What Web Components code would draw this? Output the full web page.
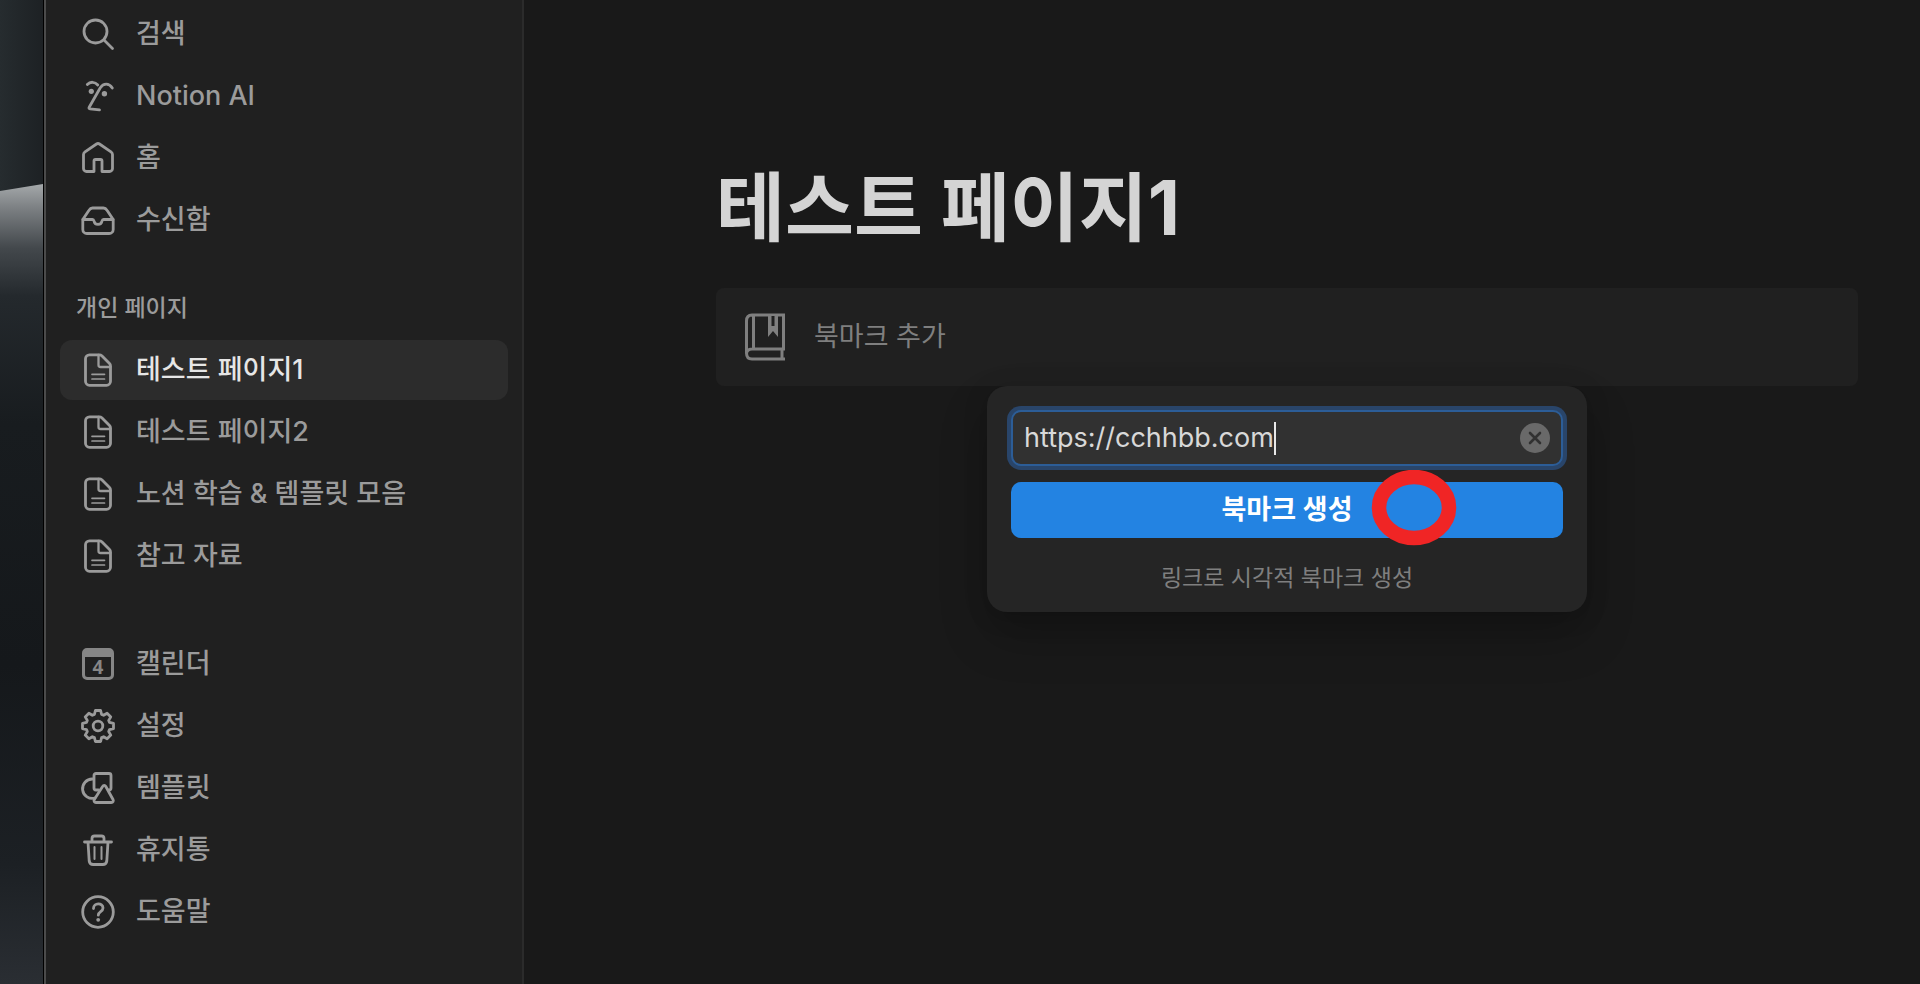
<!DOCTYPE html>
<html lang="ko">
<head>
<meta charset="UTF-8">
<title>테스트 페이지1</title>
<style>
    body {
        margin: 0;
        background: #191919;
        color: #9b9b9b;
        font-family: Inter, "Noto Sans CJK KR", sans-serif;
        font-size: 27px;
        line-height: 36px;
    }
</style>
</head>
<body>
<notion-window>
    <side-bar slot="sidebar">
        <side-item icon="search">검색</side-item>
        <side-item icon="ai">Notion AI</side-item>
        <side-item icon="home">홈</side-item>
        <side-item icon="inbox">수신함</side-item>
        <side-heading>개인 페이지</side-heading>
        <side-item icon="page" active>테스트 페이지1</side-item>
        <side-item icon="page">테스트 페이지2</side-item>
        <side-item icon="page">노션 학습 &amp; 템플릿 모음</side-item>
        <side-item icon="page">참고 자료</side-item>
        <side-gap></side-gap>
        <side-item icon="calendar">캘린더</side-item>
        <side-item icon="settings">설정</side-item>
        <side-item icon="template">템플릿</side-item>
        <side-item icon="trash">휴지통</side-item>
        <side-item icon="help">도움말</side-item>
    </side-bar>
    <page-title>테스트 페이지1</page-title>
    <bookmark-block>
        북마크 추가
        <bookmark-popup slot="popup" url="https://cchhbb.com">
            북마크 생성
            <span slot="hint">링크로 시각적 북마크 생성</span>
        </bookmark-popup>
    </bookmark-block>
</notion-window>

<script>
// all icons share a 36x36 box, stroked with the current text colour
const icons = {
    search: '<circle cx="15.5" cy="15.5" r="11.5"/><path d="M24 24l8.5 8.5"/>',
    ai: '<path d="M7.300 6.500c3-3.200 7.700-2.900 10.500.5"/><path d="M32.300 10c-3.300-5.200-8.800-5.200-12-.2L9.200 29.200c-.5.9-.2 1.500.8 1.600l9.500 1"/><circle cx="11.300" cy="13.300" r="2.600" fill="currentColor" stroke="none"/><circle cx="24.400" cy="15.800" r="2.700" fill="currentColor" stroke="none"/>',
    home: '<path d="M3.500 14.500c0-1.200.5-2 1.500-2.700L16.500 4c1-.700 2-.700 3 0L31 11.800c1 .7 1.500 1.500 1.500 2.700V28.500a3 3 0 0 1-3 3H22V21c0-1-.500-1.500-1.500-1.500h-5c-1 0-1.500.5-1.500 1.500v10.500H6.500a3 3 0 0 1-3-3z"/>',
    inbox: '<path d="M2.800 17.500v10a4 4 0 0 0 4 4h22.400a4 4 0 0 0 4-4v-10l-6.200-9.300C26 6.600 25 6 23.500 6h-11C11 6 10 6.600 9 8.200z"/><path d="M3 17.500h9.500c1 0 1.300.7 1.500 1.500.8 4.500 7.200 4.500 8 0 .2-.8.5-1.500 1.500-1.500H33"/>',
    page: '<path d="M19.500 2.800H9.500a4 4 0 0 0-4 4v22.500a4 4 0 0 0 4 4h17a4 4 0 0 0 4-4V14c0-1-.3-1.700-1-2.400L21.800 3.700c-.7-.6-1.400-.9-2.300-.9z"/><path d="M18.500 3v10a2 2 0 0 0 2 2h9.800" stroke-width="2.300"/><path d="M12 22.300h12.500M12 27h12.500" stroke-width="1.700"/>',
    calendar: '<path fill="#868686" stroke="none" fill-rule="evenodd" d="M7 2h22a5 5 0 0 1 5 5v22a5 5 0 0 1-5 5H7a5 5 0 0 1-5-5V7a5 5 0 0 1 5-5zM5 11v17.500A2.500 2.500 0 0 0 7.500 31h21a2.500 2.500 0 0 0 2.500-2.500V11z"/><text x="18" y="27.500" text-anchor="middle" font-family="Noto Sans" font-size="19" font-weight="700" fill="#868686" stroke="none">4</text>',
    settings: '<circle cx="18" cy="18" r="4.800"/><path d="M14.400 6.500L15.400 2.500H20.600L21.600 6.500L23.600 7.300L27.100 5.200L30.800 8.900L28.700 12.400L29.500 14.400L33.500 15.400V20.600L29.500 21.600L28.700 23.600L30.800 27.100L27.100 30.800L23.600 28.700L21.600 29.500L20.600 33.500H15.400L14.400 29.500L12.400 28.700L8.900 30.800L5.200 27.100L7.300 23.600L6.500 21.600L2.500 20.600V15.400L6.500 14.400L7.300 12.400L5.200 8.900L8.900 5.200L12.400 7.300z"/>',
    template: '<path d="M12.500 9a9.700 9.700 0 1 0 2.500 19"/><path d="M18.500 20h-2.500a2 2 0 0 1-2-2V5.500a2 2 0 0 1 2-2h13a2 2 0 0 1 2 2v12.500a2 2 0 0 1-2 2"/><path d="M22.600 16.500c.8-1.500 2.400-1.500 3.200 0L33 29.500c.8 1.600 0 3-1.700 3H16c-1.700 0-2.500-1.400-1.700-3z"/>',
    trash: '<path d="M4.500 10h27M12 10V6.500A2.500 2.500 0 0 1 14.500 4h7A2.500 2.500 0 0 1 24 6.500V10M8 10l1.200 19a4 4 0 0 0 4 3.500h9.600a4 4 0 0 0 4-3.500L28 10"/><path d="M14.500 15v12M21.500 15v12" stroke-width="2"/>',
    help: '<circle cx="18" cy="18" r="15.300"/><path d="M13.500 14.500c0-6 9.500-6 9.500-.5 0 3.800-4.700 3.500-4.700 7.200"/><circle cx="18.200" cy="25.800" r="1.900" fill="currentColor" stroke="none"/>'
};

class NotionWindow extends HTMLElement {
    connectedCallback() {
        this.attachShadow({ mode: 'open' });
        this.shadowRoot.innerHTML = `
            <style>
                :host {
                    display: flex;
                    min-height: 100vh;
                }
                .desktop {
                    flex: none;
                    width: 43px;
                    border-right: 1px solid #000;
                    background: #17191c;
                }
                .desktop svg {
                    display: block;
                    width: 100%;
                    height: 100%;
                }
                main {
                    flex: 1;
                    min-width: 0;
                    padding: 160px 62px 0 192px;
                }
            </style>
            <div class="desktop">
                <svg viewBox="0 0 43 984" preserveAspectRatio="none" aria-hidden="true">
                    <defs>
                        <linearGradient id="sky" x1="0" y1="0" x2="1" y2="0">
                            <stop offset="0" stop-color="#262c2f"/>
                            <stop offset="1" stop-color="#1d2124"/>
                        </linearGradient>
                        <linearGradient id="hill" x1="0" y1="0" x2="0" y2="1">
                            <stop offset="0" stop-color="#a4a8aa"/>
                            <stop offset=".03" stop-color="#7c8083"/>
                            <stop offset=".08" stop-color="#43484c"/>
                            <stop offset=".14" stop-color="#24292d"/>
                            <stop offset=".3" stop-color="#181c1f"/>
                            <stop offset=".6" stop-color="#15181b"/>
                            <stop offset=".85" stop-color="#1c2024"/>
                            <stop offset="1" stop-color="#2a2e33"/>
                        </linearGradient>
                    </defs>
                    <rect width="43" height="200" fill="url(#sky)"/>
                    <path d="M0 191L43 184V984H0z" fill="url(#hill)"/>
                </svg>
            </div>
            <slot name="sidebar"></slot>
            <main><slot></slot></main>
        `;
    }
}

class SideBar extends HTMLElement {
    connectedCallback() {
        this.attachShadow({ mode: 'open' });
        this.shadowRoot.innerHTML = `
            <style>
                :host {
                    display: block;
                    flex: none;
                    box-sizing: border-box;
                    width: 480px;
                    border-left: 2px solid #4b4b4b;
                    border-right: 2px solid #2b2b2b;
                    background: #202020;
                }
                nav {
                    display: flex;
                    flex-direction: column;
                    gap: 2px;
                    padding: 4px 14px;
                }
            </style>
            <nav><slot></slot></nav>
        `;
    }
}

class SideItem extends HTMLElement {
    connectedCallback() {
        this.attachShadow({ mode: 'open' });
        this.shadowRoot.innerHTML = `
            <style>
                :host {
                    display: block;
                    font-weight: 500;
                }
                a {
                    display: flex;
                    align-items: center;
                    gap: 20px;
                    height: 60px;
                    padding: 0 20px;
                    border-radius: 12px;
                    color: inherit;
                    text-decoration: none;
                    white-space: nowrap;
                }
                svg {
                    flex: none;
                    width: 36px;
                    height: 36px;
                    fill: none;
                    stroke: currentColor;
                    stroke-width: 2.8;
                    stroke-linecap: round;
                    stroke-linejoin: round;
                }
                :host([active]) a {
                    background: #2c2c2c;
                }
                :host([active]) span {
                    color: #e6e6e6;
                }
            </style>
            <a href="#">
                <svg viewBox="0 0 36 36" aria-hidden="true">${icons[this.getAttribute('icon')]}</svg>
                <span><slot></slot></span>
            </a>
        `;
    }
}

class SideHeading extends HTMLElement {
    connectedCallback() {
        this.attachShadow({ mode: 'open' });
        this.shadowRoot.innerHTML = `
            <style>
                :host {
                    display: block;
                    padding: 38px 16px 12px;
                    font-size: 23px;
                    font-weight: 500;
                }
            </style>
            <slot></slot>
        `;
    }
}

class SideGap extends HTMLElement {
    connectedCallback() {
        this.attachShadow({ mode: 'open' });
        this.shadowRoot.innerHTML = `
            <style>
                :host {
                    display: block;
                    height: 44px;
                }
            </style>
        `;
    }
}

class PageTitle extends HTMLElement {
    connectedCallback() {
        this.attachShadow({ mode: 'open' });
        this.shadowRoot.innerHTML = `
            <style>
                :host {
                    display: block;
                }
                h1 {
                    margin: 0 0 32px;
                    color: #d4d4d4;
                    font-size: 75px;
                    line-height: 96px;
                    font-weight: 700;
                }
            </style>
            <h1><slot></slot></h1>
        `;
    }
}

class BookmarkBlock extends HTMLElement {
    connectedCallback() {
        this.attachShadow({ mode: 'open' });
        this.shadowRoot.innerHTML = `
            <style>
                :host {
                    display: block;
                    position: relative;
                }
                button {
                    display: flex;
                    align-items: center;
                    gap: 28px;
                    width: 100%;
                    height: 98px;
                    padding: 0 28px;
                    border: 0;
                    border-radius: 8px;
                    background: #202020;
                    color: #7f7f7f;
                    font: inherit;
                }
                svg {
                    width: 42px;
                    height: 48px;
                    fill: none;
                    stroke: currentColor;
                    stroke-width: 3;
                }
                .popup {
                    position: absolute;
                    top: 100%;
                    left: 0;
                    right: 0;
                    display: flex;
                    justify-content: center;
                }
            </style>
            <button type="button">
                <svg viewBox="0 0 42 48" aria-hidden="true">
                    <path d="M41 2H8Q2.500 2 2.500 8V40Q2.500 46 8 46H41M39.500 2V36H8Q2.500 36 2.500 41M9.500 2V36M38 36V46"/>
                    <path d="M24 2h10v22l-5-6-5 6z" fill="currentColor" stroke="none"/>
                    <path d="M29 3v10" stroke="#202020" stroke-width="3"/>
                </svg>
                <span><slot></slot></span>
            </button>
            <div class="popup"><slot name="popup"></slot></div>
        `;
    }
}

class BookmarkPopup extends HTMLElement {
    connectedCallback() {
        this.attachShadow({ mode: 'open' });
        this.shadowRoot.innerHTML = `
            <style>
                :host {
                    display: block;
                    position: relative;
                    box-sizing: border-box;
                    width: 600px;
                    padding: 24px 24px 16px;
                    border-radius: 20px;
                    background: #252525;
                    box-shadow: 0 24px 48px rgba(0, 0, 0, .22), 0 4px 24px rgba(0, 0, 0, .16);
                }
                .field {
                    display: flex;
                    align-items: center;
                    box-sizing: border-box;
                    height: 56px;
                    margin-bottom: 16px;
                    padding: 0 11px;
                    border: 2px solid #2c5d97;
                    border-radius: 10px;
                    background: #313131;
                    box-shadow: 0 0 0 4px #29456a;
                }
                input {
                    min-width: 0;
                    padding: 0;
                    border: 0;
                    outline: 0;
                    background: none;
                    color: #d8d8d8;
                    font: inherit;
                    field-sizing: content;
                }
                .caret {
                    width: 2px;
                    height: 33px;
                    background: #e8e8e8;
                }
                .clear {
                    display: flex;
                    margin-left: auto;
                    padding: 0;
                    border: 0;
                    background: none;
                }
                .clear svg {
                    width: 30px;
                    height: 30px;
                }
                .create {
                    display: block;
                    width: 100%;
                    height: 56px;
                    padding: 0;
                    border: 0;
                    border-radius: 10px;
                    background: #2383e2;
                    color: #fff;
                    font: inherit;
                    font-weight: 600;
                }
                p {
                    margin: 22px 0 0;
                    color: #7f7f7f;
                    font-size: 23px;
                    text-align: center;
                }
                .mark {
                    position: absolute;
                    top: 84px;
                    left: 384px;
                    width: 86px;
                    height: 76px;
                    pointer-events: none;
                }
            </style>
            <div class="field">
                <input type="text" aria-label="URL" value="${this.getAttribute('url')}">
                <span class="caret"></span>
                <button type="button" class="clear" aria-label="지우기">
                    <svg viewBox="0 0 30 30" aria-hidden="true">
                        <circle cx="15" cy="15" r="15" fill="#696969"/>
                        <path d="M10 10l10 10M20 10L10 20" stroke="#313131" stroke-width="2.600" stroke-linecap="round"/>
                    </svg>
                </button>
            </div>
            <button type="button" class="create"><slot></slot></button>
            <p><slot name="hint"></slot></p>
            <svg class="mark" viewBox="0 0 86 76" aria-hidden="true">
                <ellipse cx="43" cy="37.500" rx="35" ry="30.500" fill="none" stroke="#f02525" stroke-width="14.500"/>
            </svg>
        `;
    }
}

customElements.define('notion-window', NotionWindow);
customElements.define('side-bar', SideBar);
customElements.define('side-item', SideItem);
customElements.define('side-heading', SideHeading);
customElements.define('side-gap', SideGap);
customElements.define('page-title', PageTitle);
customElements.define('bookmark-block', BookmarkBlock);
customElements.define('bookmark-popup', BookmarkPopup);
</script>
</body>
</html>
